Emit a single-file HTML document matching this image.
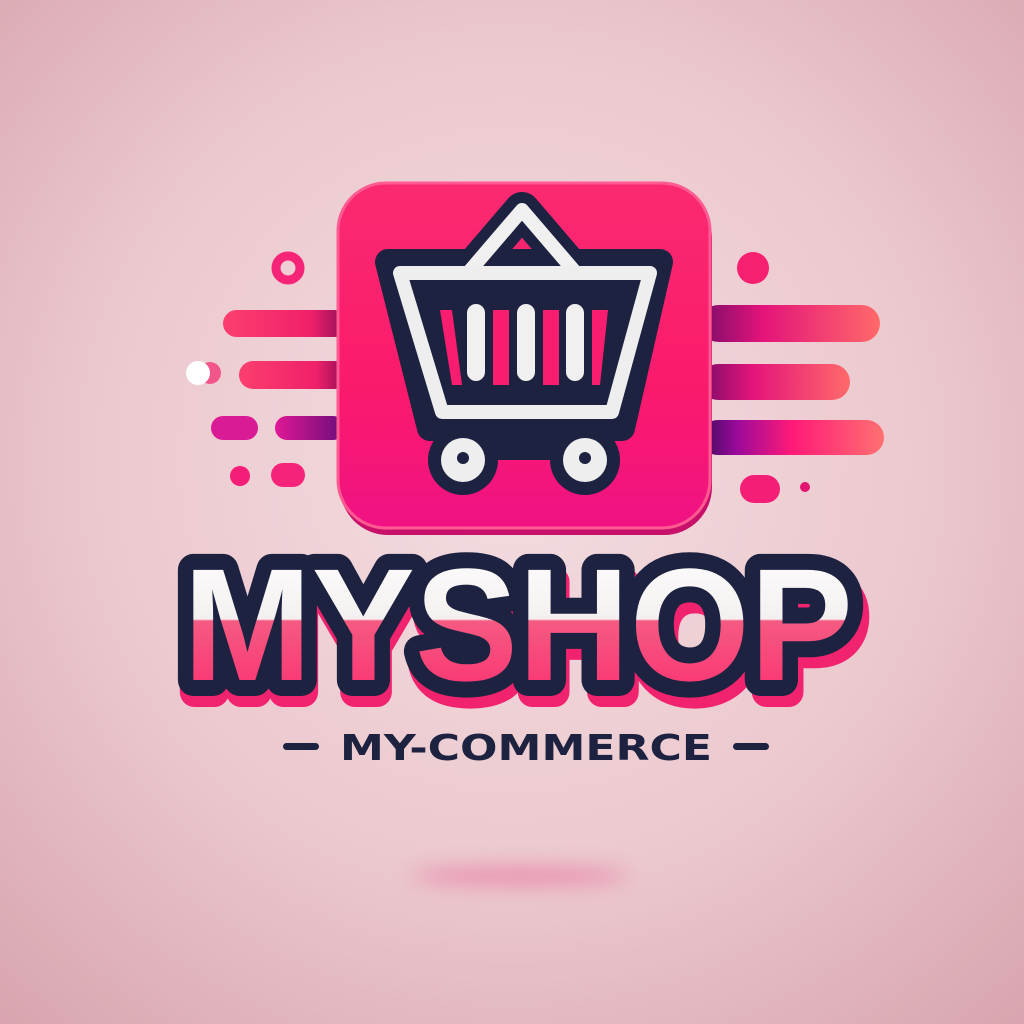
<!DOCTYPE html>
<html><head><meta charset="utf-8"><style>
html,body{margin:0;padding:0;width:1024px;height:1024px;overflow:hidden;background:#e4b9c1}
</style></head><body>
<svg width="1024" height="1024" viewBox="0 0 1024 1024" xmlns="http://www.w3.org/2000/svg">
<defs>
<radialGradient id="bg" cx="0.5" cy="0.45" r="0.75">
<stop offset="0" stop-color="#f3dde0"/><stop offset="0.55" stop-color="#ebc8ce"/><stop offset="1" stop-color="#d8a3ae"/>
</radialGradient>
<linearGradient id="box" x1="0" y1="0" x2="0" y2="1">
<stop offset="0" stop-color="#fb2a70"/><stop offset="0.6" stop-color="#fa1a6c"/><stop offset="1" stop-color="#f01284"/>
</linearGradient>
<linearGradient id="lb" x1="0" x2="1"><stop offset="0" stop-color="#fb3f6e"/><stop offset="0.7" stop-color="#f0206a"/><stop offset="1" stop-color="#8a0d55"/></linearGradient>
<linearGradient id="lb3" x1="0" x2="1"><stop offset="0" stop-color="#e01895"/><stop offset="1" stop-color="#6a0d7a"/></linearGradient>
<linearGradient id="rb" x1="0" x2="1"><stop offset="0" stop-color="#7a0c6a"/><stop offset="0.35" stop-color="#e4147a"/><stop offset="1" stop-color="#ff6a6a"/></linearGradient>
<linearGradient id="rb3" x1="0" x2="1"><stop offset="0" stop-color="#3a0a5a"/><stop offset="0.2" stop-color="#9a0a9a"/><stop offset="0.5" stop-color="#ff1a78"/><stop offset="1" stop-color="#ff7070"/></linearGradient>
<linearGradient id="txt" x1="0" y1="0" x2="0" y2="1">
<stop offset="0" stop-color="#ffffff"/><stop offset="0.47" stop-color="#f4f0f0"/><stop offset="0.48" stop-color="#f55a82"/><stop offset="1" stop-color="#fb2a6e"/>
</linearGradient>
<filter id="blur" x="-50%" y="-300%" width="200%" height="700%"><feGaussianBlur stdDeviation="10"/></filter>
</defs>
<rect width="1024" height="1024" fill="url(#bg)"/>
<ellipse cx="520" cy="876" rx="110" ry="9" fill="#e97aa0" opacity="0.75" filter="url(#blur)"/>

<!-- left lines -->
<circle cx="288" cy="268" r="12" fill="none" stroke="#f52478" stroke-width="9"/>
<rect x="223" y="310" width="125" height="27" rx="13.5" fill="url(#lb)"/>
<circle cx="210" cy="373" r="11" fill="#f2558a"/>
<circle cx="198" cy="373" r="12" fill="#ffffff"/>
<rect x="239" y="361" width="110" height="28" rx="14" fill="url(#lb)"/>
<rect x="211" y="416" width="47" height="24" rx="12" fill="#d91b95"/>
<rect x="275" y="416" width="70" height="24" rx="12" fill="url(#lb3)"/>
<circle cx="240" cy="476" r="10" fill="#f51d78"/>
<rect x="271" y="463" width="34" height="24" rx="12" fill="#f5247a"/>

<!-- right lines -->
<circle cx="753" cy="268" r="16" fill="#f61f70"/>
<rect x="700" y="305" width="180" height="37" rx="18.5" fill="url(#rb)"/>
<rect x="700" y="364" width="150" height="36" rx="18" fill="url(#rb)"/>
<rect x="700" y="420" width="184" height="35" rx="17.5" fill="url(#rb3)"/>
<rect x="740" y="475" width="40" height="28" rx="14" fill="#f41e76"/>
<circle cx="805" cy="487" r="5" fill="#e21670"/>

<!-- icon box -->
<rect x="340" y="190" width="372" height="345" rx="48" fill="#c8106a"/>
<rect x="338" y="183" width="372" height="345" rx="48" fill="url(#box)" stroke="#ff5a92" stroke-width="3"/>

<!-- cart -->
<g stroke-linejoin="round" stroke-linecap="round">
<path d="M468 273 L522 210 L576 273" fill="none" stroke="#1d2240" stroke-width="36"/>
<path d="M388 262 L660 262 L622 428 L430 428 Z" fill="#1d2240" stroke="#1d2240" stroke-width="26"/>
<rect x="455" y="420" width="145" height="40" fill="#1d2240"/>
<path d="M468 273 L522 210 L576 273" fill="none" stroke="#f0f0f0" stroke-width="14"/>
<path d="M400 273 L650 273 L612 412 L442 412 Z" fill="none" stroke="#eeeeee" stroke-width="14"/>
<g fill="#f81d6e">
<path d="M440 310 L452 310 L462 385 L452 385 Z"/>
<rect x="493" y="310" width="16" height="75"/>
<rect x="543" y="310" width="16" height="75"/>
<path d="M592 310 L608 310 L600 385 L592 385 Z"/>
</g>
<g stroke="#f0f0f0" stroke-width="18"><line x1="476" y1="313" x2="476" y2="372"/><line x1="526" y1="313" x2="526" y2="372"/><line x1="575" y1="313" x2="575" y2="372"/></g>
</g>
<circle cx="463" cy="460" r="35" fill="#1d2240"/>
<circle cx="463" cy="460" r="22" fill="#eeeeee"/>
<circle cx="463" cy="458" r="6" fill="#1d2240"/>
<circle cx="585" cy="460" r="35" fill="#1d2240"/>
<circle cx="585" cy="460" r="22" fill="#eeeeee"/>
<circle cx="585" cy="458" r="6" fill="#1d2240"/>

<!-- MYSHOP -->
<text x="522" y="692" text-anchor="middle" font-family="Liberation Sans, sans-serif" font-weight="bold" font-size="160" textLength="676" lengthAdjust="spacingAndGlyphs" fill="#f2236e" stroke="#f2236e" stroke-width="30" stroke-linejoin="round">MYSHOP</text>
<text x="518" y="680" text-anchor="middle" font-family="Liberation Sans, sans-serif" font-weight="bold" font-size="160" textLength="670" lengthAdjust="spacingAndGlyphs" fill="#1d2240" stroke="#1d2240" stroke-width="32" stroke-linejoin="round">MYSHOP</text>
<text x="518" y="680" text-anchor="middle" font-family="Liberation Sans, sans-serif" font-weight="bold" font-size="160" textLength="670" lengthAdjust="spacingAndGlyphs" fill="url(#txt)">MYSHOP</text>

<!-- subtitle -->
<rect x="283" y="743" width="36" height="7" rx="3.5" fill="#1d2240"/>
<rect x="733" y="743" width="36" height="7" rx="3.5" fill="#1d2240"/>
<text x="526" y="760" text-anchor="middle" font-family="DejaVu Sans, sans-serif" font-weight="bold" font-size="36" textLength="372" lengthAdjust="spacingAndGlyphs" fill="#1d2240">MY-COMMERCE</text>
</svg>
</body></html>
